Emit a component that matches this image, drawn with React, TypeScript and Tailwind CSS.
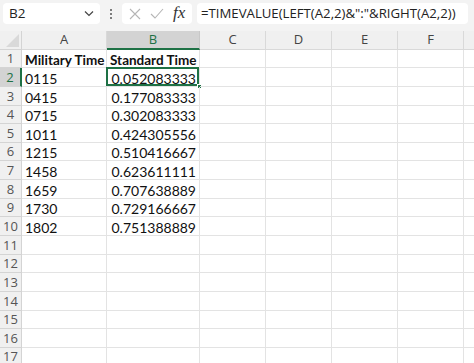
import React from "react";

const cols = ["A", "B", "C", "D", "E", "F", "G"];
const widths = [85, 93, 66, 66, 66, 66, 66];
const data: [string, string][] = [
  ["0115", "0.052083333"],
  ["0415", "0.177083333"],
  ["0715", "0.302083333"],
  ["1011", "0.424305556"],
  ["1215", "0.510416667"],
  ["1458", "0.623611111"],
  ["1659", "0.707638889"],
  ["1730", "0.729166667"],
  ["1802", "0.751388889"],
];

const hdrFont = { fontFamily: '"Open Sans", "Noto Sans", sans-serif' };
const cellFont = { fontFamily: 'Lato, "Open Sans", sans-serif' };

export default function App() {
  const rows = Array.from({ length: 17 }, (_, i) => i + 1);
  return (
    <div className="w-[474px] h-[363px] overflow-hidden bg-white relative">
      {/* Formula bar */}
      <div className="h-[31px] bg-[#f3f3f3] flex items-start pt-[3px] pl-[3px]" style={hdrFont}>
        <div className="w-[97px] h-[21px] bg-white rounded-[4px] flex items-center justify-between pl-[6px] pr-[6px]">
          <span className="text-[13.5px] text-[#222]">B2</span>
          <svg width="10" height="7" viewBox="0 0 10 7">
            <path d="M1 1.5 L5 5.5 L9 1.5" stroke="#444" strokeWidth="1.2" fill="none" />
          </svg>
        </div>
        <div className="w-[22px] h-[21px] flex flex-col items-center justify-center gap-[2px]">
          <div className="w-[2px] h-[2px] bg-[#555] rounded-full" />
          <div className="w-[2px] h-[2px] bg-[#555] rounded-full" />
          <div className="w-[2px] h-[2px] bg-[#555] rounded-full" />
        </div>
        <div className="w-[70px] h-[21px] bg-white rounded-[4px] flex items-center pl-[7px] gap-[9px]">
          <svg width="12" height="12" viewBox="0 0 12 12">
            <path d="M1 1 L11 11 M11 1 L1 11" stroke="#b5b5b5" strokeWidth="1.1" fill="none" />
          </svg>
          <svg width="14" height="11" viewBox="0 0 14 11">
            <path d="M1 6 L5 10 L13 1" stroke="#b5b5b5" strokeWidth="1.1" fill="none" />
          </svg>
          <span className="text-[17px] italic text-[#333] leading-none -mt-[2px]" style={{ fontFamily: '"Liberation Serif", serif' }}>
            fx
          </span>
        </div>
        <div className="ml-[5px] w-[271px] h-[21px] bg-white rounded-[4px] flex items-center pl-[4px] overflow-hidden">
          <span className="text-[13.2px] text-[#222] whitespace-nowrap">
            =TIMEVALUE(LEFT(A2,2)&amp;":"&amp;RIGHT(A2,2))
          </span>
        </div>
      </div>

      {/* Grid */}
      <div
        className="grid"
        style={{
          gridTemplateColumns: `22px ${widths.map((w) => w + "px").join(" ")}`,
          gridAutoRows: "18.65px",
        }}
      >
        <div className="bg-[#f0f0f0] border-r border-b border-[#d4d4d4] relative">
          <svg className="absolute right-[2px] bottom-[2px]" width="13" height="13" viewBox="0 0 13 13">
            <path d="M13 0 L13 13 L0 13 Z" fill="#d9d9d9" />
          </svg>
        </div>
        {cols.map((c) => (
          <div
            key={c}
            className={
              c === "B"
                ? "bg-[#d3d3d3] border-r border-[#c8c8c8] border-b-2 border-b-[#1e7145] flex items-center justify-center text-[13px] text-[#1e7145]"
                : "bg-[#f0f0f0] border-r border-b border-[#d9d9d9] flex items-center justify-center text-[13px] text-[#444]"
            }
            style={hdrFont}
          >
            {c === "G" ? "" : c}
          </div>
        ))}

        {rows.map((r) => {
          const d = r >= 2 && r <= 10 ? data[r - 2] : null;
          return (
            <React.Fragment key={r}>
              <div
                className={
                  r === 2
                    ? "bg-[#d3d3d3] border-r-2 border-r-[#1e7145] border-b border-[#d4d4d4] flex items-center justify-center text-[13px] text-[#1e7145] pt-[1px]"
                    : "bg-[#f0f0f0] border-r border-b border-[#d4d4d4] flex items-center justify-center text-[13px] text-[#555] pt-[1px]"
                }
                style={hdrFont}
              >
                {r}
              </div>
              {cols.map((c) => {
                let content: React.ReactNode = null;
                let align = "justify-start pl-[3px]";
                let extra = "";
                if (r === 1 && c === "A") {
                  content = "Military Time";
                  extra = "font-bold text-[13.5px]";
                } else if (r === 1 && c === "B") {
                  content = "Standard Time";
                  extra = "font-bold text-[13.5px]";
                } else if (d && c === "A") {
                  content = d[0];
                  extra = "text-[14px]";
                } else if (d && c === "B") {
                  content = d[1];
                  align = "justify-end pr-[3px]";
                  extra = "text-[14px]";
                }
                const active = r === 2 && c === "B";
                return (
                  <div
                    key={c}
                    className={`border-r border-b border-[#e3e3e3] flex items-end ${align} relative leading-[18px] text-[#111] whitespace-nowrap ${extra}`}
                    style={cellFont}
                  >
                    {content !== null && <span className="relative top-[2px]">{content}</span>}
                    {active && (
                      <>
                        <div className="absolute -left-[1px] -top-[1px] right-0 bottom-0 border-2 border-[#1e7145] pointer-events-none" />
                        <div className="absolute -right-[3px] -bottom-[3px] w-[5px] h-[5px] bg-[#1e7145] border border-white" />
                      </>
                    )}
                  </div>
                );
              })}
            </React.Fragment>
          );
        })}
      </div>
    </div>
  );
}
